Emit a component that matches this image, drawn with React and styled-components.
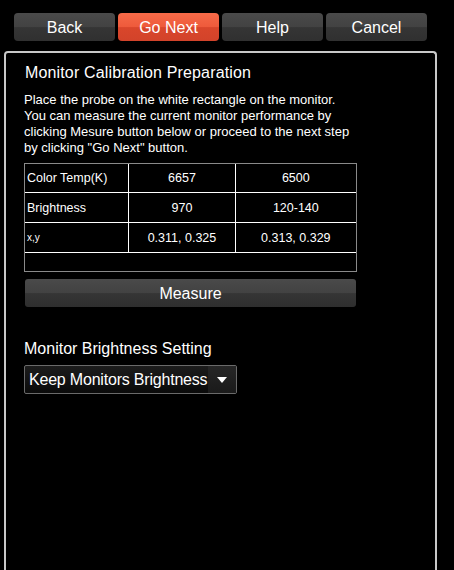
import React from "react";
import styled, { createGlobalStyle } from "styled-components";

const GlobalStyle = createGlobalStyle`
  html, body {
    margin: 0;
    padding: 0;
    background: #000;
    overflow: hidden;
  }
  body {
    font-family: "Liberation Sans", Arial, sans-serif;
    color: #fff;
  }
`;

const buttons = [
  { label: "Back" },
  { label: "Go Next", primary: true },
  { label: "Help" },
  { label: "Cancel" },
];

const rows = [
  { name: "Color Temp(K)", measured: "6657", target: "6500" },
  { name: "Brightness", measured: "970", target: "120-140" },
  { name: "x,y", measured: "0.311, 0.325", target: "0.313, 0.329", small: true },
];

const App = () => {
  return (
    <Page>
      <GlobalStyle />
      <Toolbar>
        {buttons.map((b) => (
          <NavButton key={b.label} $primary={b.primary}>
            {b.label}
          </NavButton>
        ))}
      </Toolbar>
      <Panel>
        <Title>Monitor Calibration Preparation</Title>
        <Description>
          Place the probe on the white rectangle on the monitor.
          <br />
          You can measure the current monitor performance by
          <br />
          clicking Mesure button below or proceed to the next step
          <br />
          by clicking "Go Next" button.
        </Description>
        <TableFrame>
          <ResultTable>
            <tbody>
              {rows.map((r) => (
                <tr key={r.name}>
                  <NameCell $small={r.small}>{r.name}</NameCell>
                  <ValueCell>{r.measured}</ValueCell>
                  <ValueCell $wide>{r.target}</ValueCell>
                </tr>
              ))}
            </tbody>
          </ResultTable>
        </TableFrame>
        <MeasureButton>Measure</MeasureButton>
        <SectionLabel>Monitor Brightness Setting</SectionLabel>
        <Select>
          <SelectText>Keep Monitors Brightness</SelectText>
          <SelectArrow>
            <svg width="10" height="6" viewBox="0 0 10 6">
              <path d="M0 0 L10 0 L5 6 Z" fill="#fff" />
            </svg>
          </SelectArrow>
        </Select>
      </Panel>
    </Page>
  );
};

const Page = styled.div`
  display: flex;
  flex-direction: column;
  height: 570px;
`;

const Toolbar = styled.div`
  display: flex;
  gap: 3px;
  padding: 13px 0 0 14px;
`;

const NavButton = styled.div`
  width: 101px;
  height: 28px;
  padding-top: 1px;
  border-radius: 4px;
  display: flex;
  align-items: center;
  justify-content: center;
  font-size: 16px;
  color: #fff;
  box-sizing: border-box;
  background: ${(p) =>
    p.$primary
      ? "linear-gradient(to bottom, #f66a48 0%, #ee5a3b 50%, #d9462b 52%, #d2432a 100%)"
      : "linear-gradient(to bottom, #4a4a4a 0%, #424242 50%, #353535 52%, #303030 100%)"};
`;

const Panel = styled.div`
  margin: 10px 0 0 4px;
  width: 433px;
  flex: 1;
  box-sizing: border-box;
  border: 2px solid #c8c8c8;
  border-bottom: none;
  border-radius: 4px 4px 0 0;
  padding: 10px 0 0 18px;
  min-height: 540px;
`;

const Title = styled.div`
  font-size: 16px;
  letter-spacing: 0.15px;
  line-height: 20px;
  padding-left: 1px;
`;

const Description = styled.div`
  margin-top: 9px;
  font-size: 13px;
  line-height: 16px;
`;

const TableFrame = styled.div`
  margin-top: 7px;
  width: 333px;
  height: 109px;
  box-sizing: border-box;
  border: 1px solid #8a8a8a;
`;

const ResultTable = styled.table`
  border-collapse: collapse;
  width: 331px;
  font-size: 12.5px;
  line-height: 14px;
  td {
    border: 1px solid #fff;
    height: 29px;
    padding: 0;
  }
  tr:first-child td {
    border-top: none;
    height: 28px;
  }
  td:first-child {
    border-left: none;
  }
  td:last-child {
    border-right: none;
  }
`;

const NameCell = styled.td`
  width: 101px;
  padding-left: 2px !important;
  font-size: ${(p) => (p.$small ? "10px" : "12.5px")};
`;

const ValueCell = styled.td`
  text-align: center;
  width: ${(p) => (p.$wide ? "120px" : "105px")};
`;

const MeasureButton = styled.div`
  margin-top: 7px;
  margin-left: 1px;
  width: 331px;
  height: 28px;
  padding-top: 1px;
  box-sizing: border-box;
  border-radius: 3px;
  display: flex;
  align-items: center;
  justify-content: center;
  font-size: 16px;
  background: linear-gradient(to bottom, #4a4a4a 0%, #424242 50%, #353535 52%, #2e2e2e 100%);
`;

const SectionLabel = styled.div`
  margin-top: 32px;
  font-size: 16px;
  line-height: 20px;
`;

const Select = styled.div`
  margin-top: 6px;
  width: 213px;
  height: 29px;
  box-sizing: border-box;
  border: 1px solid #6a6a6a;
  border-radius: 2px;
  display: flex;
  align-items: stretch;
  background: linear-gradient(to bottom, #1c1c1c 0%, #0a0a0a 100%);
`;

const SelectText = styled.div`
  flex: 1;
  display: flex;
  align-items: center;
  padding-left: 4px;
  font-size: 16px;
  letter-spacing: -0.2px;
  white-space: nowrap;
`;

const SelectArrow = styled.div`
  width: 28px;
  flex-shrink: 0;
  display: flex;
  align-items: center;
  justify-content: center;
  background: linear-gradient(to bottom, #262626 0%, #1a1a1a 100%);
`;

export default App;
